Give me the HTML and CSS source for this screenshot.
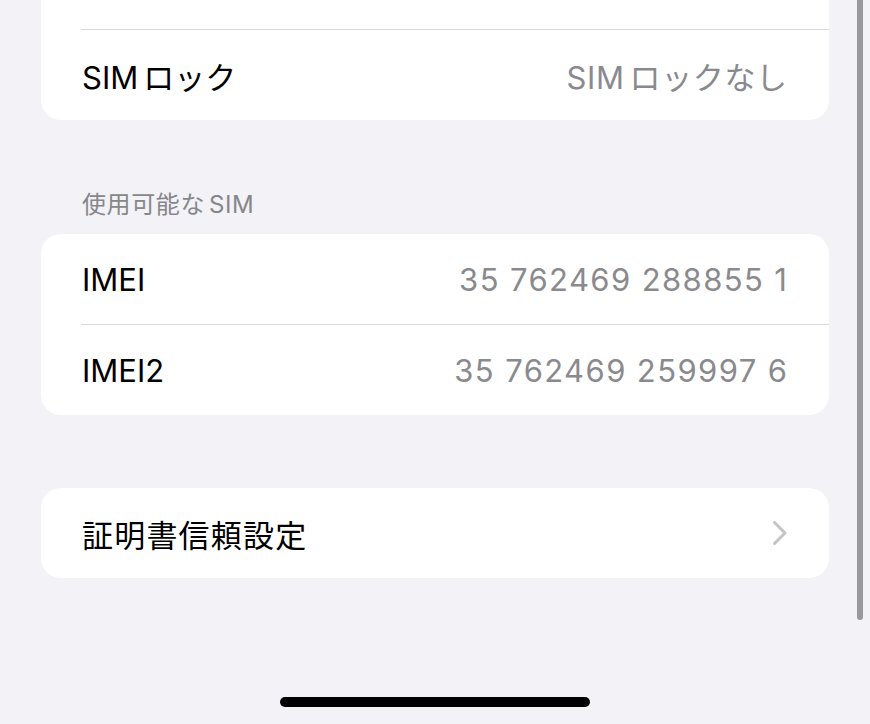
FILE: index.html
```html
<!DOCTYPE html>
<html lang="ja">
<head>
<meta charset="utf-8">
<title>情報</title>
<link rel="stylesheet" href="styles.css">
</head>
<body>
<main class="screen">
  <section class="group group-first">
    <div class="row row-hidden"></div>
    <div class="row">
      <span class="label">SIM<span class="gap"></span>ロック</span>
      <span class="value">SIM<span class="gap"></span>ロックなし</span>
    </div>
  </section>

  <h2 class="group-title">使用可能な<span class="gap-sm"></span>SIM</h2>
  <section class="group">
    <div class="row">
      <span class="label">IMEI</span>
      <span class="value number">35 762469 288855 1</span>
    </div>
    <div class="row">
      <span class="label">IMEI2</span>
      <span class="value number">35 762469 259997 6</span>
    </div>
  </section>

  <section class="group group-spaced">
    <div class="row">
      <span class="label cjk">証明書信頼設定</span>
      <svg class="chevron" viewBox="0 0 16 26" width="16" height="26" aria-hidden="true">
        <path d="M2.5 2.5 L13 13 L2.5 23.5" fill="none" stroke="currentColor" stroke-width="3" stroke-linecap="round" stroke-linejoin="round"/>
      </svg>
    </div>
  </section>
</main>
<div class="scroll-indicator"></div>
<div class="home-indicator"></div>
</body>
</html>
```

FILE: styles.css
```css
* {
  box-sizing: border-box;
}

html, body {
  margin: 0;
  height: 100%;
}

body {
  background: #f2f2f7;
  font-family: Inter, "Noto Sans CJK JP", sans-serif;
  color: #000;
  overflow: hidden;
  position: relative;
}

.screen {
  padding: 0 41px;
  display: flex;
  flex-direction: column;
}

.group {
  background: #fff;
  border-radius: 20px;
  overflow: hidden;
}

.group-first {
  margin-top: -61px;
}

.group-spaced {
  margin-top: 73px;
}

.row {
  height: 90px;
  display: flex;
  align-items: center;
  justify-content: space-between;
  padding: 0 42px 0 41px;
  position: relative;
}

.row + .row::before {
  content: "";
  position: absolute;
  top: -1px;
  left: 40px;
  right: 0;
  height: 1px;
  background: #d9d9dd;
}

.row + .row {
  margin-top: 1px;
}

.label {
  font-size: 31px;
}

.label.cjk {
  letter-spacing: 1.2px;
}

.value {
  font-size: 31px;
  color: #8a8a8e;
  letter-spacing: 0.6px;
  margin-right: -0.6px;
}

.value.number {
  letter-spacing: 1.4px;
  margin-right: -1.4px;
}

/* small space iOS leaves between Latin and kana */
.gap {
  display: inline-block;
  width: 5px;
}

.gap-sm {
  display: inline-block;
  width: 4px;
}

.group-title {
  margin: 71px 0 0;
  padding: 0 41px 15px;
  font-size: 24px;
  line-height: 28px;
  font-weight: 400;
  color: #86868b;
  letter-spacing: 0.6px;
}

.chevron {
  color: #c4c4c7;
  margin-right: -1px;
}

.scroll-indicator {
  position: absolute;
  top: -10px;
  left: 857px;
  width: 6px;
  height: 630px;
  border-radius: 3px;
  background: #98989d;
}

.home-indicator {
  position: absolute;
  left: 280px;
  top: 697px;
  width: 310px;
  height: 10px;
  border-radius: 5px;
  background: #000;
}
```
